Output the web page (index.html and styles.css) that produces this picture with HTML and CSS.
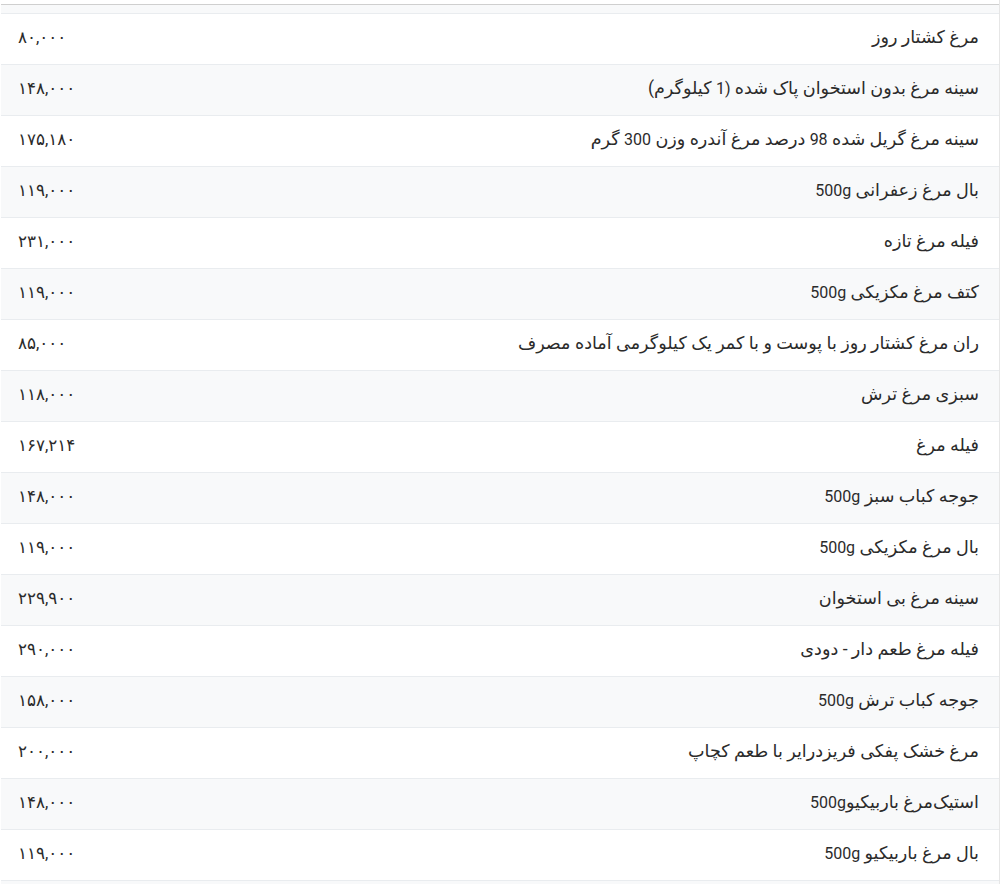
FILE: index.html
```html
<!DOCTYPE html>
<html lang="fa" dir="rtl">
<head>
<meta charset="utf-8">
<title>قیمت مرغ</title>
<link rel="stylesheet" href="styles.css">
</head>
<body>
<div class="table-wrap">
  <table class="price-table">
    <tbody>
      <tr class="stub"><td></td><td></td></tr>
      <tr><td class="name">مرغ کشتار روز</td><td class="price">۸۰,۰۰۰</td></tr>
      <tr><td class="name">سینه مرغ بدون استخوان پاک شده <span class="lat">(1</span> کیلوگرم)</td><td class="price">۱۴۸,۰۰۰</td></tr>
      <tr><td class="name">سینه مرغ گریل شده <span class="lat">98</span> درصد مرغ آندره وزن <span class="lat">300</span> گرم</td><td class="price">۱۷۵,۱۸۰</td></tr>
      <tr><td class="name">بال مرغ زعفرانی <span class="lat">500g</span></td><td class="price">۱۱۹,۰۰۰</td></tr>
      <tr><td class="name">فیله مرغ تازه</td><td class="price">۲۳۱,۰۰۰</td></tr>
      <tr><td class="name">کتف مرغ مکزیکی <span class="lat">500g</span></td><td class="price">۱۱۹,۰۰۰</td></tr>
      <tr><td class="name">ران مرغ کشتار روز با پوست و با کمر یک کیلوگرمی آماده مصرف</td><td class="price">۸۵,۰۰۰</td></tr>
      <tr><td class="name">سبزی مرغ ترش</td><td class="price">۱۱۸,۰۰۰</td></tr>
      <tr><td class="name">فیله مرغ</td><td class="price">۱۶۷,۲۱۴</td></tr>
      <tr><td class="name">جوجه کباب سبز <span class="lat">500g</span></td><td class="price">۱۴۸,۰۰۰</td></tr>
      <tr><td class="name">بال مرغ مکزیکی <span class="lat">500g</span></td><td class="price">۱۱۹,۰۰۰</td></tr>
      <tr><td class="name">سینه مرغ بی استخوان</td><td class="price">۲۲۹,۹۰۰</td></tr>
      <tr><td class="name">فیله مرغ طعم دار - دودی</td><td class="price">۲۹۰,۰۰۰</td></tr>
      <tr><td class="name">جوجه کباب ترش <span class="lat">500g</span></td><td class="price">۱۵۸,۰۰۰</td></tr>
      <tr><td class="name">مرغ خشک پفکی فریزدرایر با طعم کچاپ</td><td class="price">۲۰۰,۰۰۰</td></tr>
      <tr><td class="name">استیک‌مرغ باربیکیو<span class="lat">500g</span></td><td class="price">۱۴۸,۰۰۰</td></tr>
      <tr><td class="name">بال مرغ باربیکیو <span class="lat">500g</span></td><td class="price">۱۱۹,۰۰۰</td></tr>
      <tr class="stub"><td></td><td></td></tr>
    </tbody>
  </table>
</div>
</body>
</html>
```
FILE: styles.css
```css
html, body {
  margin: 0;
  padding: 0;
  background: #ffffff;
}

body {
  font-family: Roboto, "DejaVu Sans", sans-serif;
  color: #2b2b2b;
  direction: rtl;
}

.table-wrap {
  width: 998px;
  padding-top: 4px;
  border-right: 1px solid #e6e6e6;
  height: 880px;
  overflow: hidden;
}

.price-table {
  width: 100%;
  border-collapse: collapse;
  border-top: 1px solid #cfcfcf;
}

.price-table tr {
  height: 51px;
  border-top: 1px solid #e9ecef;
}

.price-table tr:nth-child(odd) {
  background: #f8f9fa;
}

.price-table tr.stub {
  height: 9px;
}

.price-table tr.stub:first-child {
  border-top: none;
}

.price-table td {
  padding: 0 0 5px 0;
  vertical-align: middle;
  font-size: 17.6px;
  white-space: nowrap;
}

.price-table tr.stub td {
  padding: 0;
}

.price-table .lat {
  font-size: 16px;
}

.price-table td.name {
  text-align: right;
  padding-right: 20px;
}

.price-table td.price {
  text-align: left;
  padding-left: 17px;
  width: 150px;
  font-size: 16.8px;
}
```
